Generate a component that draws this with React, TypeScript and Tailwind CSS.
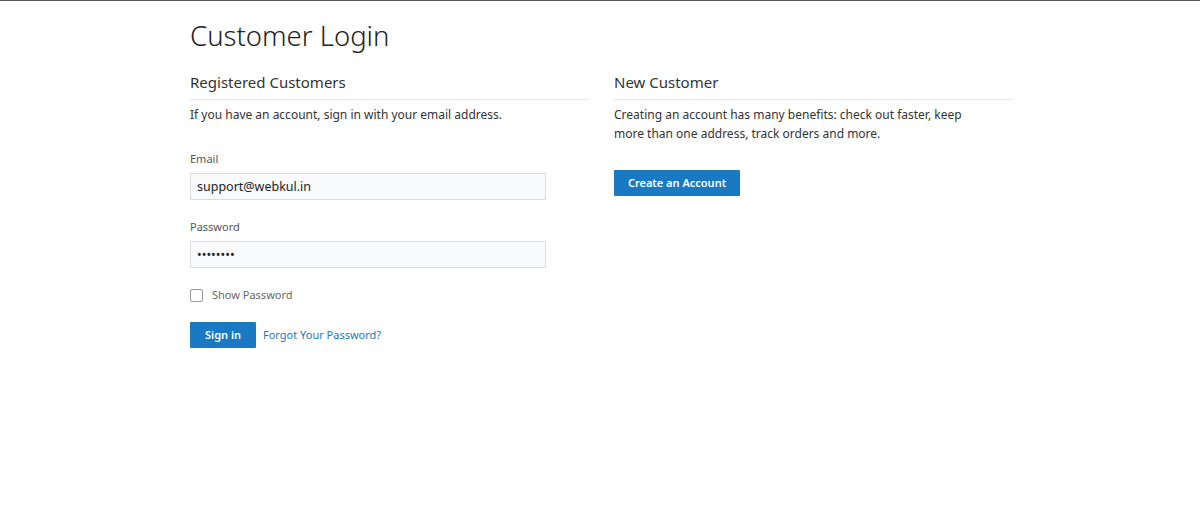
import { useState } from 'react'

export default function App() {
  const [email, setEmail] = useState('support@webkul.in')
  const [password, setPassword] = useState('12345678')
  const [show, setShow] = useState(false)

  return (
    <div className="min-h-[513px] bg-white border-t border-[#5a5a5a] text-[#333] font-['Noto_Sans',sans-serif]">
      <div className="ml-[190px] w-[822px]">
        <h1 className="pt-[15px] text-[27.5px] font-light leading-[40px] text-[#222]">Customer Login</h1>

        <div className="grid grid-cols-2 gap-[26px] mt-[15px]">
          <section>
            <h2 className="text-[15px] leading-[22px] pb-[6px] border-b border-[#e6e6e6]">Registered Customers</h2>
            <p className="mt-[5px] text-[12px] leading-[19px]">If you have an account, sign in with your email address.</p>

            <div className="mt-[27px] w-[356px]">
              <Field label="Email" value={email} onChange={setEmail} type="email" />
              <div className="mt-[19px]">
                <Field label="Password" value={password} onChange={setPassword} type={show ? 'text' : 'password'} />
              </div>
            </div>

            <label className="mt-[19px] h-[16px] flex items-center gap-[9px] text-[11px] text-[#666]">
              <input type="checkbox" checked={show} onChange={(e) => setShow(e.target.checked)} className="appearance-none w-[13px] h-[13px] border border-[#999] rounded-[2px] bg-white" />
              Show Password
            </label>

            <div className="mt-[19px] flex items-center gap-[7px]">
              <button className="w-[66px] h-[26px] bg-[#1979c3] text-white text-[11px] font-semibold rounded-[1px]">Sign in</button>
              <a href="#" className="text-[11px] text-[#1979c3]">Forgot Your Password?</a>
            </div>
          </section>

          <section>
            <h2 className="text-[15px] leading-[22px] pb-[6px] border-b border-[#e6e6e6]">New Customer</h2>
            <p className="mt-[5px] w-[360px] text-[12px] leading-[19px]">Creating an account has many benefits: check out faster, keep more than one address, track orders and more.</p>
            <button className="mt-[27px] w-[126px] h-[26px] bg-[#1979c3] text-white text-[11px] font-semibold rounded-[1px]">Create an Account</button>
          </section>
        </div>
      </div>
    </div>
  )
}

function Field({ label, value, onChange, type }: { label: string; value: string; onChange: (v: string) => void; type: string }) {
  return (
    <div>
      <label className="block text-[11px] leading-[16px] text-[#555]">{label}</label>
      <input
        type={type}
        value={value}
        onChange={(e) => onChange(e.target.value)}
        className="mt-[6px] w-full h-[27px] px-[6px] text-[12.5px] text-[#222] bg-[#f8fafc] border border-[#dcdcdc] outline-none"
      />
    </div>
  )
}
